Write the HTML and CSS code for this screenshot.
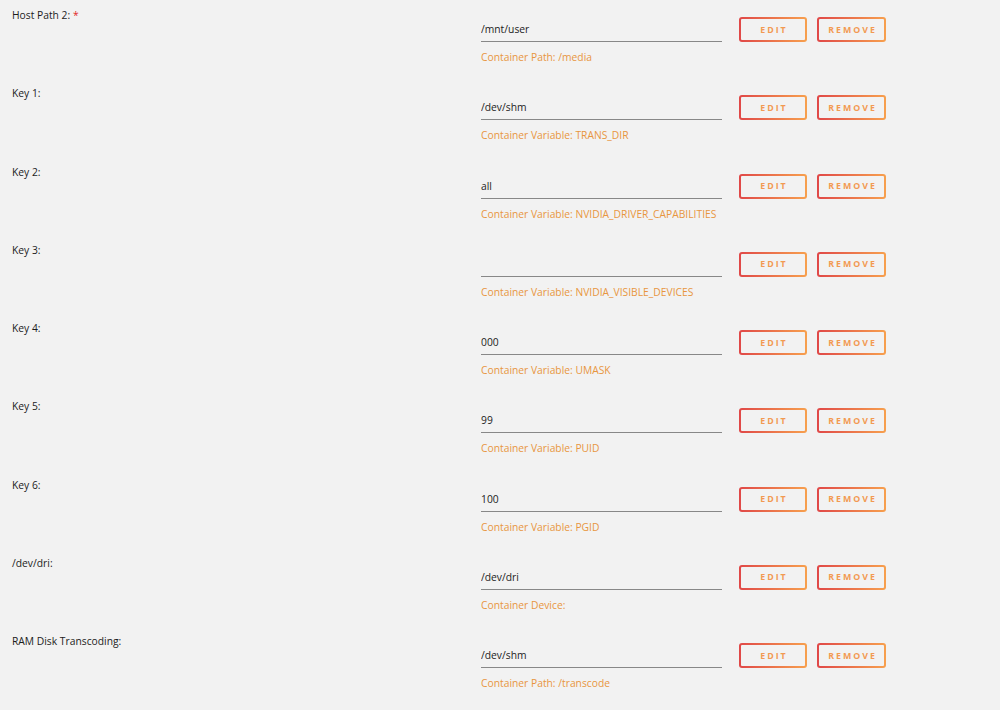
FILE: index.html
```html
<!DOCTYPE html>
<html lang="en">
<head>
    <meta charset="UTF-8" />
    <title>Container Settings</title>
    <meta name="viewport" content="width=device-width, initial-scale=1.0" />
    <link rel="stylesheet" href="styles.css">
</head>
<body>

<div class="config-list">
    <div class="config-row">
        <div class="config-label">Host Path 2: <span class="required">*</span></div>
        <div class="config-field">
            <input type="text" value="/mnt/user" />
            <div class="config-hint">Container Path: /media</div>
        </div>
        <button class="btn">Edit</button>
        <button class="btn btn-wide">Remove</button>
    </div>

    <div class="config-row">
        <div class="config-label">Key 1:</div>
        <div class="config-field">
            <input type="text" value="/dev/shm" />
            <div class="config-hint">Container Variable: TRANS_DIR</div>
        </div>
        <button class="btn">Edit</button>
        <button class="btn btn-wide">Remove</button>
    </div>

    <div class="config-row">
        <div class="config-label">Key 2:</div>
        <div class="config-field">
            <input type="text" value="all" />
            <div class="config-hint">Container Variable: NVIDIA_DRIVER_CAPABILITIES</div>
        </div>
        <button class="btn">Edit</button>
        <button class="btn btn-wide">Remove</button>
    </div>

    <div class="config-row">
        <div class="config-label">Key 3:</div>
        <div class="config-field">
            <input type="text" value="" />
            <div class="config-hint">Container Variable: NVIDIA_VISIBLE_DEVICES</div>
        </div>
        <button class="btn">Edit</button>
        <button class="btn btn-wide">Remove</button>
    </div>

    <div class="config-row">
        <div class="config-label">Key 4:</div>
        <div class="config-field">
            <input type="text" value="000" />
            <div class="config-hint">Container Variable: UMASK</div>
        </div>
        <button class="btn">Edit</button>
        <button class="btn btn-wide">Remove</button>
    </div>

    <div class="config-row">
        <div class="config-label">Key 5:</div>
        <div class="config-field">
            <input type="text" value="99" />
            <div class="config-hint">Container Variable: PUID</div>
        </div>
        <button class="btn">Edit</button>
        <button class="btn btn-wide">Remove</button>
    </div>

    <div class="config-row">
        <div class="config-label">Key 6:</div>
        <div class="config-field">
            <input type="text" value="100" />
            <div class="config-hint">Container Variable: PGID</div>
        </div>
        <button class="btn">Edit</button>
        <button class="btn btn-wide">Remove</button>
    </div>

    <div class="config-row">
        <div class="config-label">/dev/dri:</div>
        <div class="config-field">
            <input type="text" value="/dev/dri" />
            <div class="config-hint">Container Device:</div>
        </div>
        <button class="btn">Edit</button>
        <button class="btn btn-wide">Remove</button>
    </div>

    <div class="config-row">
        <div class="config-label">RAM Disk Transcoding:</div>
        <div class="config-field">
            <input type="text" value="/dev/shm" />
            <div class="config-hint">Container Path: /transcode</div>
        </div>
        <button class="btn">Edit</button>
        <button class="btn btn-wide">Remove</button>
    </div>
</div>

</body>
</html>
```

FILE: styles.css
```css
body {
  margin: 0;
  background-color: #f2f2f2;
  font-family: "Open Sans", "Noto Sans", sans-serif;
  font-size: 10.3px;
  color: #1c1c1c;
}
.config-list {
  display: flex;
  flex-direction: column;
}
.config-row {
  display: flex;
  align-items: flex-start;
  height: 78.25px;
}
.config-label {
  width: 469px;
  padding-left: 12px;
  margin-top: 8px;
  line-height: 14px;
}
.required {
  color: #e22828;
}
.config-field {
  width: 241px;
  margin-top: 19px;
}
.config-field input {
  display: block;
  width: 100%;
  height: 23px;
  box-sizing: border-box;
  padding: 0 0 2px 0;
  border: none;
  border-bottom: 1px solid #888;
  background: transparent;
  font-family: inherit;
  font-size: 10.3px;
  color: #1c1c1c;
  outline: none;
}
.config-hint {
  margin-top: 8px;
  line-height: 14px;
  white-space: nowrap;
  color: #e8963f;
}
.btn {
  margin-top: 17px;
  margin-left: 17px;
  width: 68px;
  height: 25px;
  padding: 0 0 0 2px;
  border: 2px solid transparent;
  border-radius: 3px;
  background: linear-gradient(#f2f2f2, #f2f2f2) padding-box,
              linear-gradient(90deg, #e04848, #f7a04e) border-box;
  color: #f29a52;
  font-family: inherit;
  font-size: 8.8px;
  font-weight: bold;
  letter-spacing: 2px;
  text-transform: uppercase;
  cursor: pointer;
}
.btn-wide {
  margin-left: 10px;
  width: 69px;
}
```
